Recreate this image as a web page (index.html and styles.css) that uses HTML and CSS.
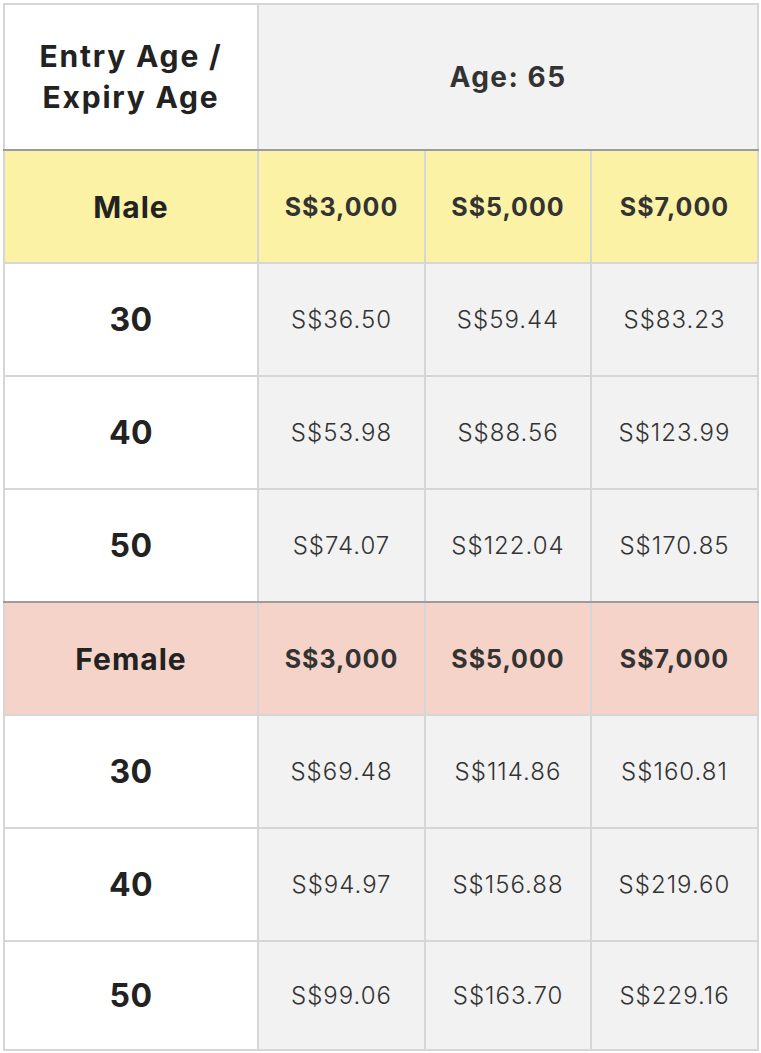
FILE: index.html
```html
<!DOCTYPE html>
<html>
<head>
<meta charset="utf-8">
<link rel="stylesheet" href="styles.css">
</head>
<body>
<table class="premium">
  <colgroup>
    <col class="c-age">
    <col class="c-val">
    <col class="c-mid">
    <col class="c-val">
  </colgroup>
  <thead>
    <tr class="head">
      <th class="label">Entry Age /<br>Expiry Age</th>
      <th class="expiry" colspan="3">Age: 65</th>
    </tr>
  </thead>
  <tbody>
    <tr class="group male">
      <th class="label">Male</th>
      <th>S$3,000</th><th>S$5,000</th><th>S$7,000</th>
    </tr>
    <tr class="row"><th class="age">30</th><td>S$36.50</td><td>S$59.44</td><td>S$83.23</td></tr>
    <tr class="row"><th class="age">40</th><td>S$53.98</td><td>S$88.56</td><td>S$123.99</td></tr>
    <tr class="row last"><th class="age">50</th><td>S$74.07</td><td>S$122.04</td><td>S$170.85</td></tr>
    <tr class="group female">
      <th class="label">Female</th>
      <th>S$3,000</th><th>S$5,000</th><th>S$7,000</th>
    </tr>
    <tr class="row"><th class="age">30</th><td>S$69.48</td><td>S$114.86</td><td>S$160.81</td></tr>
    <tr class="row"><th class="age">40</th><td>S$94.97</td><td>S$156.88</td><td>S$219.60</td></tr>
    <tr class="row end"><th class="age">50</th><td>S$99.06</td><td>S$163.70</td><td>S$229.16</td></tr>
  </tbody>
</table>
</body>
</html>
```

FILE: styles.css
```css
html, body {
  margin: 0;
  background: #ffffff;
}
body {
  padding: 3px 0 0 3px;
  font-family: Inter, "Liberation Sans", sans-serif;
  color: #222222;
}
.premium {
  border-collapse: collapse;
  table-layout: fixed;
  width: 754px;
}
.c-age { width: 254px; }
.c-val { width: 167px; }
.c-mid { width: 166px; }
.premium th,
.premium td {
  border: 2px solid #d6d6d6;
  padding: 0;
  text-align: center;
  vertical-align: middle;
}
.head { height: 146px; }
.head .label {
  background: #ffffff;
  font-size: 30px;
  font-weight: 700;
  line-height: 41px;
  color: #222222;
  letter-spacing: 1.8px;
}
.head .expiry {
  background: #f2f2f2;
  font-size: 28px;
  font-weight: 700;
  color: #333333;
  letter-spacing: 1.5px;
}
.head th,
.last th,
.last td {
  border-bottom-color: #9c9c9c;
}
.group { height: 113px; }
.group th {
  border-top-color: #9c9c9c;
  font-size: 25px;
  font-weight: 700;
  color: #333333;
  letter-spacing: 1px;
}
.group .label {
  font-size: 30px;
  color: #222222;
  letter-spacing: 1px;
}
.male th { background: #fcf2a6; }
.female th { background: #f6d3c8; }
.row { height: 113px; }
.row.end { height: 109px; }
.row .age {
  background: #ffffff;
  font-size: 32px;
  font-weight: 700;
  color: #222222;
  letter-spacing: 0.5px;
}
.row td {
  background: #f2f2f2;
  font-size: 24px;
  font-weight: 300;
  color: #333333;
  letter-spacing: 1px;
}
```
